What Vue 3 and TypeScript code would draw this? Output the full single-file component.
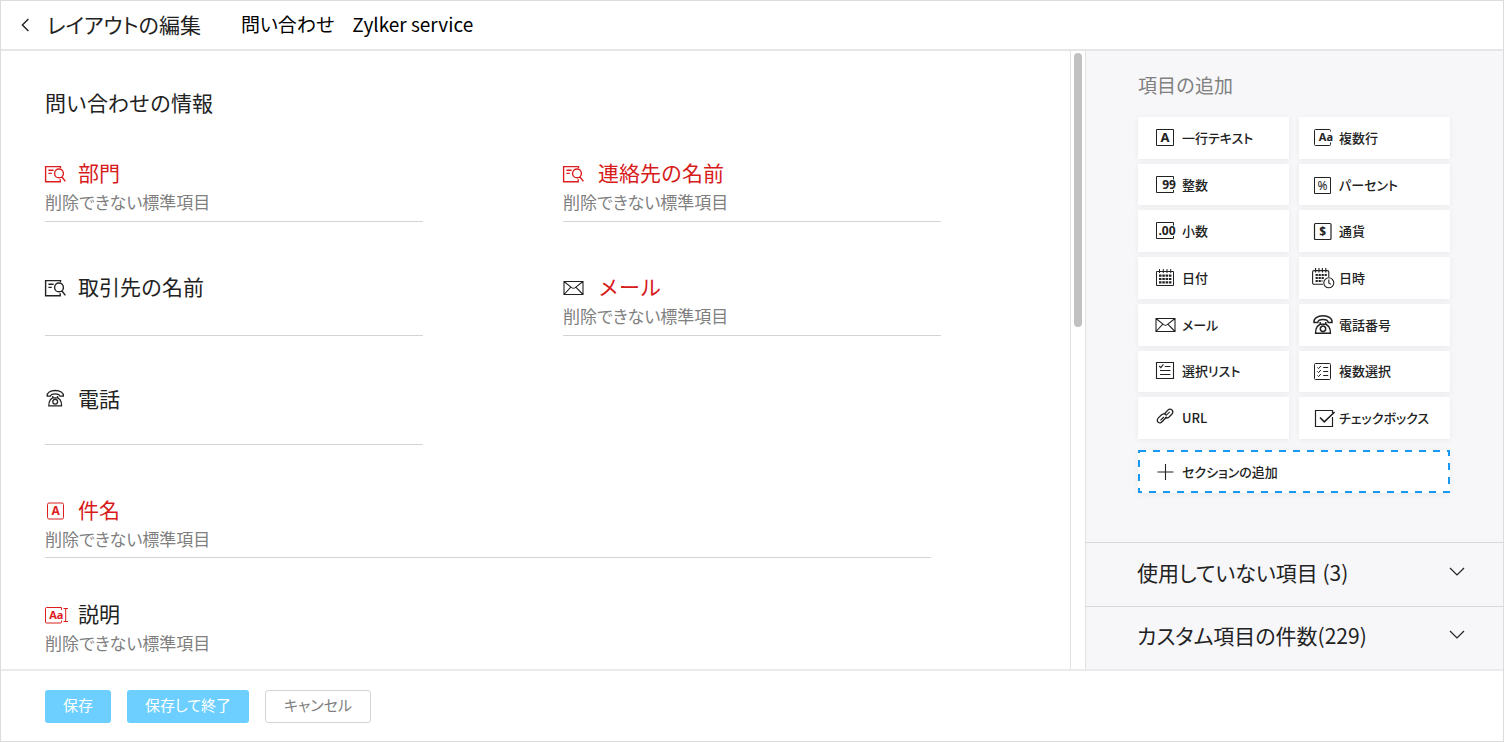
<script setup lang="ts">
interface Field {
  id: string
  label: string
  icon: string
  required?: boolean
  iconRed?: boolean
  hint?: string
  layout: string[]
}

interface PaletteItem {
  label: string
  icon: string
}

interface Stroke {
  d: string
  width?: number
  dash?: string
}

interface Icon {
  strokes: Stroke[]
  text?: { value: string; x: number; y: number; size: number; weight: number }
}

const icons: Record<string, Icon> = {
  lookup: {
    strokes: [
      { d: 'M15.5 6V4.6H.6V19.8H15.2V17.2M3.4 8.2H8.6M3.4 11.4H6.8M9.6 11.4a4.4 4.4 0 1 0 8.8 0a4.4 4.4 0 1 0 -8.8 0M16.8 14.8L20.4 19.4', width: 1.4 },
    ],
  },
  mail: {
    strokes: [
      { d: 'M1 5.5H20V18.5H1ZM1 5.5L8.6 11.6Q10.4 12.9 12.2 11.6L20 5.5M1 18.5L7.8 11.2M20 18.5L12.8 11.2', width: 1.1 },
    ],
  },
  phone: {
    strokes: [
      { d: 'M2 9.4C1.4 5.2 5.6 2.8 11 2.8S20.6 5.2 20 9.4L16.2 9.4C15.8 7.2 14 6.6 11 6.6S6.2 7.2 5.8 9.4Z', width: 1.5 },
      { d: 'M8.2 9V11.2L5.2 13.6Q3.4 16 3.6 20.2H18.4Q18.6 16 16.8 13.6L13.8 11.2V9M8.2 11.2H13.8M8.3 15.8a2.7 2.7 0 1 0 5.4 0a2.7 2.7 0 1 0 -5.4 0', width: 1.5 },
    ],
  },
  phoneSmall: {
    strokes: [
      { d: 'M2.2 8.2C1.8 4.6 5.4 2.5 10.2 2.5S18.8 4.6 18.4 8.2H15C14.6 6.2 13 5.8 10.2 5.8S5.8 6.2 5.4 8.2Z', width: 1.3 },
      { d: 'M7.8 8V9.8L5.3 11.8Q3.7 14 3.8 17.9H16.6Q16.7 14 15.1 11.8L12.6 9.8V8M7.8 9.8H12.6M7.8 13.8a2.4 2.4 0 1 0 4.8 0a2.4 2.4 0 1 0 -4.8 0', width: 1.3 },
    ],
  },
  textField: {
    strokes: [{ d: 'M4 4H17Q18.5 4 18.5 5.5V18.5Q18.5 20 17 20H4Q2.5 20 2.5 18.5V5.5Q2.5 4 4 4Z' }],
    text: { value: 'A', x: 6.4, y: 16.2, size: 12, weight: 700 },
  },
  textareaField: {
    strokes: [{ d: 'M16.5 7V4.5H1.5Q.5 4.5 .5 5.5V19Q.5 20 1.5 20H15.5Q16.5 20 16.5 19V17.5M18.5 5.5H23M18.5 18.5H23M20.7 5.5V18.5' }],
    text: { value: 'Aa', x: 4.2, y: 16.2, size: 11, weight: 700 },
  },
  text: {
    strokes: [{ d: 'M1.5 3.5H18.5V19.5H1.5Z' }],
    text: { value: 'A', x: 5.6, y: 16.4, size: 13, weight: 700 },
  },
  textarea: {
    strokes: [{ d: 'M18.5 5.5V4.5Q18.5 3.5 17.5 3.5H3.5Q2.5 3.5 2.5 4.5V18.5Q2.5 19.5 3.5 19.5H17.5Q18.5 19.5 18.5 18.5V16.5' }],
    text: { value: 'Aa', x: 6.8, y: 15, size: 11, weight: 700 },
  },
  integer: {
    strokes: [{ d: 'M18.5 6.5V3.5H1.5V19.5H18.5V17' }],
    text: { value: '99', x: 7.2, y: 16.2, size: 12, weight: 700 },
  },
  decimal: {
    strokes: [{ d: 'M18.5 6.5V3.5H1.5V19.5H18.5V17' }],
    text: { value: '.00', x: 3.4, y: 16.2, size: 12, weight: 700 },
  },
  percent: {
    strokes: [{ d: 'M2.5 4.5H18.5V20.5H2.5Z' }],
    text: { value: '%', x: 5.4, y: 16.8, size: 12, weight: 400 },
  },
  currency: {
    strokes: [{ d: 'M3.5 4.5H18Q19 4.5 19 5.5V19.5Q19 20.5 18 20.5H3.5Q2.5 20.5 2.5 19.5V5.5Q2.5 4.5 3.5 4.5Z', width: 1.2 }],
    text: { value: '$', x: 7.3, y: 17, size: 12, weight: 700 },
  },
  date: {
    strokes: [
      { d: 'M1.5 5.5H18.5V19.5H1.5ZM4.5 3V7M8.3 3V7M12 3V7M15.7 3V7' },
      { d: 'M4 9.7H16.4M4 13H16.4M4 16.3H16.4', width: 2.2, dash: '2.5 .8' },
    ],
  },
  datetime: {
    strokes: [
      { d: 'M11 18.2H2Q.6 18.2 .6 16.8V6Q.6 4.6 2 4.6H15.4Q16.8 4.6 16.8 6V11M3.6 2V6.6M7 2V6.6M10.4 2V6.6M13.8 2V6.6', width: 1.1 },
      { d: 'M3.6 9H15M3.6 12H12M3.6 15H10.4', width: 2, dash: '2.2 .8' },
      { d: 'M11.8 16.8a5 5 0 1 0 10 0a5 5 0 1 0 -10 0M16.8 13.6V16.9L18.8 18.4', width: 1.1 },
    ],
  },
  picklist: {
    strokes: [{ d: 'M1.5 3.5H18.5V19.5H1.5ZM4.2 7L5.8 8.6L8.4 5.4M9.8 7.5H15.4M5 11.5H15.4M5 15.5H15.4', width: 1.1 }],
  },
  multiselect: {
    strokes: [
      { d: 'M3.5 4.5H17.5Q18.5 4.5 18.5 5.5V19.5Q18.5 20.5 17.5 20.5H3.5Q2.5 20.5 2.5 19.5V5.5Q2.5 4.5 3.5 4.5Z' },
      { d: 'M5.4 8.4L6.6 9.6L8.8 7M5.4 12.4L6.6 13.6L8.8 11M5.4 16.4L6.6 17.6L8.8 15M11.2 8.5H16.2M11.2 12.5H16.2M11.2 16.5H16.2' },
    ],
  },
  link: {
    strokes: [
      { d: 'M9.2 8.2L12.6 4.4Q14.9 2.2 17 3.9Q18.8 6 16.8 8.2L13.8 11.2Q11.8 12.8 9.8 11.6M11.6 10.8L7.8 15Q5.4 18 3.2 16.2Q1.2 14.2 3.6 11.6L6.6 8.8Q8.8 7 11 8.6', width: 1.3 },
      { d: 'M10.8 9.6L14.8 5.8M5.4 14.4L8.8 11', width: 1.1 },
    ],
  },
  checkbox: {
    strokes: [
      { d: 'M20.5 11V20.5H3.5V4.5H20.5V7', width: 1.2 },
      { d: 'M8 11.5L12.3 15.8L22.6 6', width: 1.7 },
    ],
  },
  plus: {
    strokes: [{ d: 'M10.5 4V20M2.5 12H18.5', width: 1.1 }],
  },
}

const standardHint = '削除できない標準項目'

const fields: Field[] = [
  { id: 'department', label: '部門', icon: 'lookup', required: true, iconRed: true, hint: standardHint, layout: ['start'] },
  { id: 'contact', label: '連絡先の名前', icon: 'lookup', required: true, iconRed: true, hint: standardHint, layout: ['end'] },
  { id: 'account', label: '取引先の名前', icon: 'lookup', layout: ['start'] },
  { id: 'email', label: 'メール', icon: 'mail', required: true, hint: standardHint, layout: ['end'] },
  { id: 'phone', label: '電話', icon: 'phoneSmall', layout: ['start', 'short'] },
  { id: 'subject', label: '件名', icon: 'textField', required: true, iconRed: true, hint: standardHint, layout: ['wide'] },
  { id: 'description', label: '説明', icon: 'textareaField', iconRed: true, hint: standardHint, layout: ['wide', 'last'] },
]

const palette: PaletteItem[] = [
  { label: '一行テキスト', icon: 'text' },
  { label: '複数行', icon: 'textarea' },
  { label: '整数', icon: 'integer' },
  { label: 'パーセント', icon: 'percent' },
  { label: '小数', icon: 'decimal' },
  { label: '通貨', icon: 'currency' },
  { label: '日付', icon: 'date' },
  { label: '日時', icon: 'datetime' },
  { label: 'メール', icon: 'mail' },
  { label: '電話番号', icon: 'phone' },
  { label: '選択リスト', icon: 'picklist' },
  { label: '複数選択', icon: 'multiselect' },
  { label: 'URL', icon: 'link' },
  { label: 'チェックボックス', icon: 'checkbox' },
]

const groups: string[] = ['使用していない項目 (3)', 'カスタム項目の件数(229)']
</script>

<template>
  <div class="page">
    <header class="header">
      <button class="back" type="button" aria-label="戻る">
        <svg width="10" height="14" viewBox="0 0 10 14"><path d="M8.4 1L2.4 7L8.4 13" fill="none" stroke="currentColor" stroke-width="1.4" /></svg>
      </button>
      <h1>レイアウトの編集</h1>
      <span class="crumb">問い合わせ</span>
      <span class="crumb">Zylker service</span>
    </header>

    <div class="body">
      <main class="canvas">
        <h2>問い合わせの情報</h2>
        <div class="fields">
          <section v-for="field in fields" :key="field.id" class="field" :class="field.layout">
            <h3 :class="{ required: field.required }">
              <svg class="icon" :class="{ red: field.iconRed }" viewBox="0 0 24 24" aria-hidden="true">
                <path v-for="s in icons[field.icon].strokes" :key="s.d" :d="s.d" :stroke-width="s.width ?? 1" :stroke-dasharray="s.dash" />
                <text v-if="icons[field.icon].text" :x="icons[field.icon].text!.x" :y="icons[field.icon].text!.y" :font-size="icons[field.icon].text!.size" :font-weight="icons[field.icon].text!.weight">{{ icons[field.icon].text!.value }}</text>
              </svg>
              {{ field.label }}
            </h3>
            <p v-if="field.hint">{{ field.hint }}</p>
          </section>
        </div>
      </main>

      <div class="track"><div class="thumb"></div></div>

      <aside class="sidebar">
        <section class="add">
          <h2>項目の追加</h2>
          <div class="palette">
            <button v-for="item in palette" :key="item.icon" class="tile" type="button">
              <svg class="icon" viewBox="0 0 24 24" aria-hidden="true">
                <path v-for="s in icons[item.icon].strokes" :key="s.d" :d="s.d" :stroke-width="s.width ?? 1" :stroke-dasharray="s.dash" />
                <text v-if="icons[item.icon].text" :x="icons[item.icon].text!.x" :y="icons[item.icon].text!.y" :font-size="icons[item.icon].text!.size" :font-weight="icons[item.icon].text!.weight">{{ icons[item.icon].text!.value }}</text>
              </svg>
              {{ item.label }}
            </button>
          </div>
          <button class="tile add-section" type="button">
            <svg class="dash" aria-hidden="true"><rect x="1" y="1" /></svg>
            <svg class="icon" viewBox="0 0 24 24" aria-hidden="true">
              <path v-for="s in icons.plus.strokes" :key="s.d" :d="s.d" :stroke-width="s.width" />
            </svg>
            セクションの追加
          </button>
        </section>
        <button v-for="group in groups" :key="group" class="group" type="button">
          {{ group }}
          <svg width="16" height="10" viewBox="0 0 16 10" aria-hidden="true"><path d="M1 1L8 8L15 1" fill="none" stroke="currentColor" stroke-width="1.2" /></svg>
        </button>
      </aside>
    </div>

    <footer class="footer">
      <button class="primary" type="button">保存</button>
      <button class="primary" type="button">保存して終了</button>
      <button class="secondary" type="button">キャンセル</button>
    </footer>
  </div>
</template>

<style>
body {
  margin: 0;
}
</style>

<style scoped>
.page {
  display: flex;
  flex-direction: column;
  box-sizing: border-box;
  min-height: 100vh;
  border: 1px solid #dcdcdc;
  background: #fff;
  color: #222;
  font-family: "Noto Sans CJK JP", "Noto Sans", sans-serif;
  font-feature-settings: "palt";
}

h1,
h2,
h3,
p {
  margin: 0;
  font-weight: 400;
}

h2,
h3 {
  font-feature-settings: normal;
}

button {
  margin: 0;
  padding: 0;
  border: 0;
  background: none;
  color: inherit;
  font: inherit;
  font-feature-settings: inherit;
  cursor: pointer;
}

.icon {
  flex: none;
  width: 24px;
  height: 24px;
  overflow: visible;
}

.icon path {
  fill: none;
  stroke: currentColor;
}

.icon text {
  fill: currentColor;
  font-family: "Noto Sans", sans-serif;
}

.header {
  display: flex;
  align-items: center;
  height: 46px;
  padding: 0 0 2px 19px;
  border-bottom: 2px solid #e6e6e6;
}

.back {
  display: flex;
  padding-top: 2px;
  margin-right: 17px;
}

h1 {
  margin-right: 40px;
  font-size: 21px;
  line-height: 32px;
}

.crumb {
  margin-right: 18px;
  color: #000;
  font-size: 19px;
  line-height: 32px;
}

.body {
  display: grid;
  flex: 1;
  grid-template-columns: minmax(0, 1fr) 16px 417px;
}

.canvas {
  padding: 35px 129px 8px 44px;
}

.canvas h2 {
  font-size: 21px;
  line-height: 32px;
}

.fields {
  display: grid;
  grid-template-columns: 1fr 1fr;
  column-gap: 140px;
  row-gap: 49px;
  margin-top: 39px;
}

.field {
  min-height: 64px;
  border-bottom: 1px solid #d4d4d4;
}

.field.start {
  grid-column: 1;
}

.field.short {
  min-height: 61px;
  margin-top: -2px;
}

.field.wide {
  grid-column: 1 / -1;
  min-height: 0;
  margin-right: 10px;
  padding-bottom: 5px;
}

.field.last {
  margin-top: -9px;
  padding-bottom: 0;
  border-bottom: 0;
}

.field h3 {
  display: flex;
  align-items: flex-start;
  gap: 9px;
  height: 32px;
  font-size: 21px;
  line-height: 30px;
}

.field.end h3 {
  gap: 11px;
}

.field .required {
  color: #d71a1a;
}

.field .icon {
  margin-top: 5px;
  color: #222;
}

.field .icon.red {
  color: #dc1e1e;
}

.field p {
  color: #808080;
  font-size: 17px;
  line-height: 26px;
}

.track {
  box-sizing: border-box;
  padding: 2px 3px;
  border: 1px solid #e2e2e2;
  border-width: 0 1px;
}

.thumb {
  height: 274px;
  border-radius: 4px;
  background: #c1c1c1;
}

.sidebar {
  display: flex;
  flex-direction: column;
  background: #f7f7fa;
}

.add {
  flex: 1;
  padding: 18px 53px 0 52px;
}

.add h2 {
  color: #808080;
  font-size: 19px;
  line-height: 32px;
}

.palette {
  display: grid;
  grid-template-columns: 1fr 1fr;
  grid-auto-rows: 1fr;
  gap: 5px 10px;
  height: 322px;
  margin-top: 16px;
}

.tile {
  display: flex;
  align-items: center;
  gap: 3px;
  padding-left: 17px;
  background: #fff;
  box-shadow: 0 1px 6px rgba(0, 0, 0, 0.06);
  font-size: 13px;
  font-weight: 500;
  line-height: 20px;
  text-align: left;
  white-space: nowrap;
}

.tile:nth-child(even) {
  padding-left: 13px;
}

.tile.add-section {
  position: relative;
  width: 100%;
  height: 43px;
  margin-top: 11px;
  padding-left: 17px;
}

.dash {
  position: absolute;
  inset: 0;
  width: 100%;
  height: 100%;
}

.dash rect {
  width: calc(100% - 2px);
  height: calc(100% - 2px);
  fill: none;
  stroke: #1798f2;
  stroke-width: 2;
  stroke-dasharray: 7 7;
}

.group {
  display: flex;
  align-items: center;
  justify-content: space-between;
  height: 64px;
  padding: 0 38px 6px 51px;
  border-top: 1px solid #d8d8d8;
  font-size: 21px;
  line-height: 32px;
}

.group:last-child {
  height: 63px;
}

.footer {
  display: flex;
  gap: 16px;
  padding: 19px 44px 18px;
  border-top: 2px solid #ebebeb;
}

.footer button {
  box-sizing: border-box;
  height: 33px;
  padding: 0 18px 3px;
  border-radius: 3px;
  font-size: 15px;
  line-height: 24px;
}

.footer .primary {
  background: #6dcfff;
  color: #fff;
}

.footer .secondary {
  border: 1px solid #d4d4d4;
  color: #808080;
}
</style>
